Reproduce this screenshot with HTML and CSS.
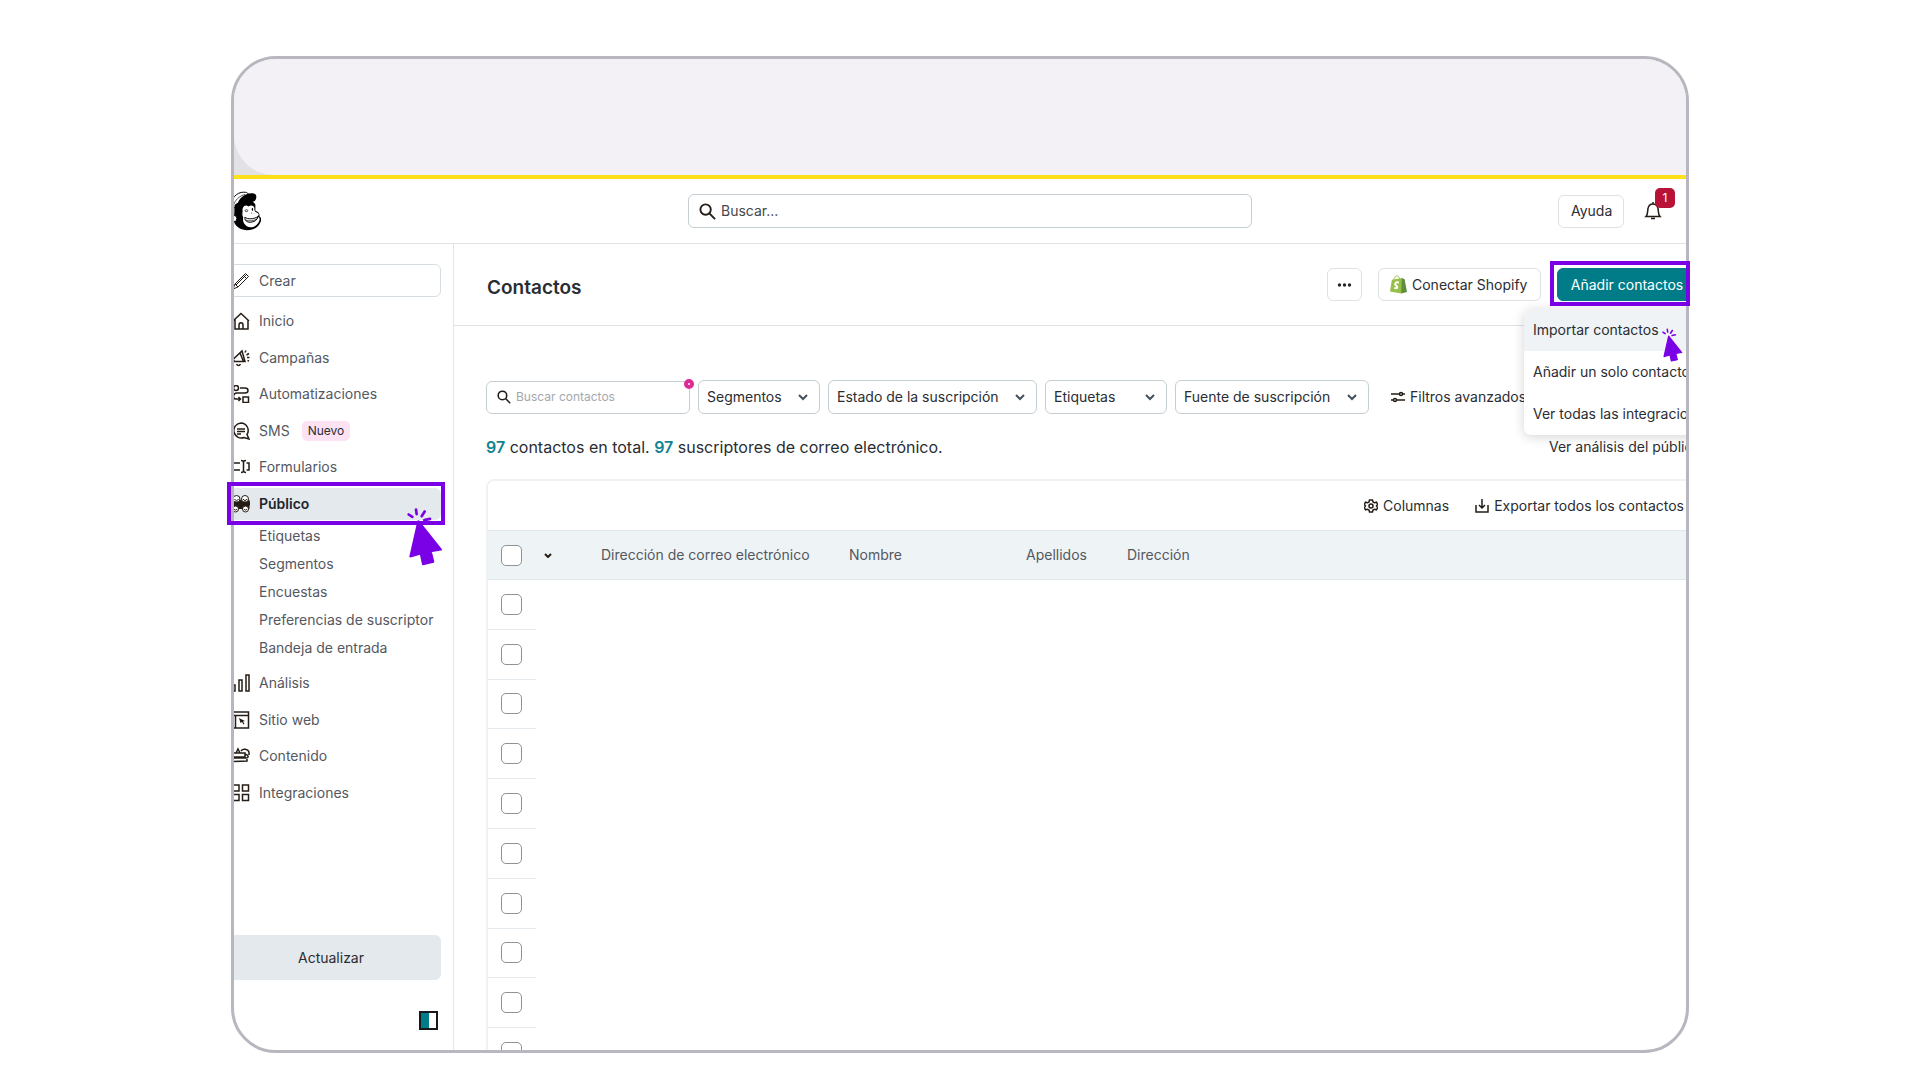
FILE: index.html
```html
<!DOCTYPE html>
<html lang="es">
<head>
  <meta charset="UTF-8">
  <title>Contactos</title>
  <link rel="stylesheet" href="styles.css">
</head>
<body>
  <svg class="defs" aria-hidden="true">
    <symbol id="search" viewBox="0 0 18 18"><circle cx="7" cy="7" r="5.5"/><path d="M11 11l6 6"/></symbol>
    <symbol id="click" viewBox="0 0 108 176">
      <path class="click-arrow" d="M34 42L102 127L71 132L79 164L48 171L41 139L10 148Z"/>
      <path class="click-rays" d="M5 22l11 7M27 7l2 14M53 13l-9 14M69 35l-17 4"/>
    </symbol>
  </svg>

  <div class="stage">
    <div class="frame">
      <div class="browser-bar"><div class="browser-fill"></div></div>

      <div class="app">
        <header class="topbar">
          <svg class="logo" viewBox="0 0 100 120" role="img" aria-label="Mailchimp">
            <path d="M4 50C8 24 26 2 48 3c14 0 18 8 10 14L24 50z" fill="#fff" stroke="#000" stroke-width="3"/>
            <path d="M16 44C22 26 34 14 52 10" fill="none" stroke="#000" stroke-width="2"/>
            <path d="M20 42c10-10 22-14 32-9 12-5 28-2 31 8v18c10 3 14 9 12 17 7 5 7 12 3 19-6 14-20 23-40 23-18 0-34-9-40-26z"/>
            <path d="M28 44C30 22 54 3 78 7c10 2 10 14 3 23-9 6-23 0-31 9z"/>
            <path d="M44 58c-1-12 9-19 18-12 8-6 19-2 18 7 0 8 2 10 10 13 6 4 2 8-2 11 12 3 8 13 3 20-8 12-24 16-34 9-9-6-13-14-11-27-5-8-1-14-2-21z" fill="#fff"/>
            <path d="M51 79c10 7 26 6 40-2-2 11-12 17-24 17-10 0-17-5-16-15z" fill="#fff" stroke="#000" stroke-width="3"/>
            <path d="M53 87c12 5 24 3 34-3M70 66l3 1M77 66l1 1" fill="none" stroke="#000" stroke-width="2"/>
            <ellipse cx="56" cy="59" rx="4" ry="3" fill="none" stroke="#000" stroke-width="2"/>
            <ellipse cx="74" cy="55" rx="2" ry="5"/>
            <circle cx="17" cy="83" r="10" fill="#fff" stroke="#000" stroke-width="3"/>
          </svg>
          <label class="global-search">
            <svg class="line"><use href="#search"/></svg>
            <input type="text" placeholder="Buscar..." aria-label="Buscar">
          </label>
          <div class="top-actions">
            <button class="btn help">Ayuda</button>
            <button class="bell" aria-label="Notificaciones">
              <svg class="line" viewBox="0 0 18 20"><path d="M2 15.500C4 13.500 3.500 10 4 7.500 4.500 4.500 6.500 3 9 3s4.500 1.500 5 4.500c.5 2.500 0 6 2 8zM9 3V1M7 17.500h4"/></svg>
              <span class="badge">1</span>
            </button>
          </div>
        </header>

        <div class="body">
          <aside class="sidebar">
            <button class="create">
              <svg class="line" viewBox="0 0 18 18"><path d="M1 17l2-5L13.500 1.500l3 3L6 15zM11.500 3.500l3 3M4 13L14 3M3 12l3 3"/></svg>
              Crear
            </button>
            <nav class="nav nav-top">
              <a href="#"><svg class="line" viewBox="0 0 18 18"><path d="M1 9l8-7.500 8 7.500M3 7.500V17h13V8M7 17v-4c0-3 4-3 4 0v4"/></svg>Inicio</a>
              <a href="#"><svg class="line" viewBox="0 0 18 18"><path d="M1 10.500L10 2l3 10.500H2.500zM8 4l3.500 8.500M4.500 15c1 2 3 2 4 0M13 3.500l1-2M14.500 6l2.500-1.500M15 8.500h2.500M15.500 11.500l1.500.5"/></svg>Campañas</a>
              <a href="#"><svg class="line" viewBox="0 0 18 18"><circle cx="4" cy="3" r="2.500"/><path d="M8 3h5c4 0 4 5 0 5H5c-4 0-5 6-1 6h4M6.500 12l2 2-2 2M11 12h5.500v5.500H11z"/></svg>Automatizaciones</a>
              <a href="#"><svg class="line" viewBox="0 0 18 18"><path d="M9 1a7.500 7.500 0 1 0 3 14.500l5 1.500-2-4.500A7.500 7.500 0 0 0 9 1zM5 7h8M5 9.500h8M5 12h4"/></svg>SMS <span class="tag">Nuevo</span></a>
              <a href="#"><svg class="line" viewBox="0 0 18 18"><path d="M8 5H0v7h8M9 2.500c2 0 2.500.5 2.500 2v8c0 1.500-.5 2-2.500 2M14 2.500c-2 0-2.500.5-2.500 2v8c0 1.500.5 2 2.500 2M14.500 5H17v7h-2.500"/></svg>Formularios</a>
              <a href="#" class="active"><svg viewBox="0 0 18 18"><path d="M0 5h17.500v9H0z" fill="#241c15"/><g fill="#fff" stroke="#241c15"><circle cx="4.500" cy="4" r="3.500"/><circle cx="13" cy="4" r="3.500"/><circle cx="3.500" cy="14" r="3"/><circle cx="13.500" cy="14" r="3"/></g><path d="M0 6.500h18v4H0z" fill="#241c15"/><path d="M2.500 4c1 2 3 2 4 0M11 4c1 2 3 2 4 0M2 14c1 1.500 2 1.500 3 0M12 14c1 1.500 2 1.500 3 0" fill="none" stroke="#241c15"/></svg>Público</a>
            </nav>
            <nav class="subnav">
              <a href="#">Etiquetas</a>
              <a href="#">Segmentos</a>
              <a href="#">Encuestas</a>
              <a href="#">Preferencias de suscriptor</a>
              <a href="#">Bandeja de entrada</a>
            </nav>
            <nav class="nav nav-bottom">
              <a href="#"><svg class="line" viewBox="0 0 18 18"><path d="M0 11h3v6H0zM7 6h3v11H7zM14 1h3v16h-3z"/></svg>Análisis</a>
              <a href="#"><svg class="line" viewBox="0 0 18 18"><path d="M0 1h16.500v16H0M0 4.500h16.500M3.500 4.500V17"/><path d="M7 7l6 3-2 .5 1.500 2.500-1 .5L10 11l-1.500 1z" fill="#241c15" stroke="none"/></svg>Sitio web</a>
              <a href="#"><svg class="line" viewBox="0 0 18 18"><path d="M0 6h13v4H0zM13 7c4 1 4 4 1 4H1M0 14.500l15-.5v-2M4 6l2-4 2 4M9 4c2-3 7-2 8 1v3"/></svg>Contenido</a>
              <a href="#"><svg class="line" viewBox="0 0 18 18"><path d="M1 1h6v6H1zM10.500 1h6v6h-6zM1 10.500h6v6H1zM10.500 10.500h6v6h-6z"/></svg>Integraciones</a>
            </nav>
            <button class="upgrade">Actualizar</button>
            <button class="collapse" aria-label="Contraer menú"></button>
          </aside>

          <main class="main">
            <div class="page-head">
              <h1>Contactos</h1>
              <button class="btn more" aria-label="Más opciones"><svg viewBox="0 0 14 4"><circle cx="2" cy="2" r="1.700"/><circle cx="7" cy="2" r="1.700"/><circle cx="12" cy="2" r="1.700"/></svg></button>
              <button class="btn shopify">
                <svg viewBox="0 0 18 20">
                  <path d="M2 5l11-2 2 15-3 1.500L0 17.500z" fill="#95bf47"/>
                  <path d="M12.500 3l3 1.500L18 18l-6 1.500z" fill="#5e8e3e"/>
                  <path d="M4 5c.5-3 2.500-4.500 4-4s2 2 2 3" fill="none" stroke="#95bf47"/>
                  <path d="M9.500 8C6 6.500 4.500 9.500 6.500 11s2 4-2 2.500" fill="none" stroke="#fff" stroke-width="2"/>
                </svg>
                Conectar Shopify
              </button>
              <div class="add">
                <button class="btn add-btn">Añadir contactos</button>
                <div class="menu">
                  <a href="#" class="hover">Importar contactos</a>
                  <a href="#">Añadir un solo contacto</a>
                  <a href="#">Ver todas las integraciones</a>
                </div>
              </div>
            </div>

            <div class="content">
              <div class="filters">
                <label class="contact-search">
                  <svg class="line"><use href="#search"/></svg>
                  <input type="text" placeholder="Buscar contactos" aria-label="Buscar contactos">
                  <span class="dot"></span>
                </label>
                <select class="w-short" aria-label="Segmentos"><option>Segmentos</option></select>
                <select class="w-long" aria-label="Estado de la suscripción"><option>Estado de la suscripción</option></select>
                <select class="w-short" aria-label="Etiquetas"><option>Etiquetas</option></select>
                <select class="w-mid" aria-label="Fuente de suscripción"><option>Fuente de suscripción</option></select>
                <button class="plain advanced">
                  <svg class="line" viewBox="0 0 14 14"><path d="M0 4h8M12 4h2M0 10h2M6 10h8"/><circle cx="10" cy="4" r="1.500"/><circle cx="4" cy="10" r="1.500"/></svg>
                  Filtros avanzados
                </button>
              </div>

              <div class="summary">
                <p><b>97</b> contactos en total. <b>97</b> suscriptores de correo electrónico.</p>
                <a href="#">Ver análisis del público</a>
              </div>

              <div class="card">
                <div class="card-tools">
                  <button class="plain">
                    <svg class="line" viewBox="0 0 14 14"><path d="M5.500 1h3l.5 2 1.500.8 2-.6 1.200 2.300L12.500 7l1.200 1.500-1.200 2.300-2-.6L9 11l-.5 2h-3L5 11l-1.500-.8-2 .6L.3 8.500 1.500 7 .3 5.500l1.200-2.300 2 .6L5 3z"/><circle cx="7" cy="7" r="2"/></svg>
                    Columnas
                  </button>
                  <button class="plain">
                    <svg class="line" viewBox="0 0 14 14"><path d="M7 0v9M4 6l3 3 3-3M1 6v7h12V6"/></svg>
                    Exportar todos los contactos
                  </button>
                </div>
                <table>
                  <thead>
                    <tr>
                      <th class="c-check"><input type="checkbox" aria-label="Seleccionar todos"></th>
                      <th class="c-open"><svg class="line" viewBox="0 0 8 5"><path d="M1 1l3 3 3-3"/></svg></th>
                      <th class="c-mail">Dirección de correo electrónico</th>
                      <th class="c-name">Nombre</th>
                      <th class="c-last">Apellidos</th>
                      <th>Dirección</th>
                    </tr>
                  </thead>
                  <tbody>
                    <tr><td><input type="checkbox" aria-label="Contacto 1"></td></tr>
                    <tr><td><input type="checkbox" aria-label="Contacto 2"></td></tr>
                    <tr><td><input type="checkbox" aria-label="Contacto 3"></td></tr>
                    <tr><td><input type="checkbox" aria-label="Contacto 4"></td></tr>
                    <tr><td><input type="checkbox" aria-label="Contacto 5"></td></tr>
                    <tr><td><input type="checkbox" aria-label="Contacto 6"></td></tr>
                    <tr><td><input type="checkbox" aria-label="Contacto 7"></td></tr>
                    <tr><td><input type="checkbox" aria-label="Contacto 8"></td></tr>
                    <tr><td><input type="checkbox" aria-label="Contacto 9"></td></tr>
                    <tr><td><input type="checkbox" aria-label="Contacto 10"></td></tr>
                  </tbody>
                </table>
              </div>
            </div>
          </main>
        </div>
      </div>
    </div>

    <!-- tutorial marks, drawn over the frame edge -->
    <div class="mark mark-nav"></div>
    <div class="mark mark-add"></div>
    <svg class="click click-nav"><use href="#click"/></svg>
    <svg class="click click-add"><use href="#click"/></svg>
  </div>
</body>
</html>
```
FILE: styles.css
```css
* { box-sizing: border-box; }
body { margin: 0; padding: 56px 231px 27px; height: 100vh; background: #fff; color: #2a2d32; font: 14px/20px Inter, "Liberation Sans", sans-serif; }
a { color: inherit; text-decoration: none; }
button, input, select { font: inherit; color: inherit; }
button { cursor: pointer; }
svg { display: block; flex: none; }
.defs { position: absolute; width: 0; height: 0; }
.line { fill: none; stroke: #241c15; stroke-width: 1.5; }

.stage { position: relative; height: 100%; }
.frame { height: 100%; display: flex; flex-direction: column; overflow: hidden; border: 3px solid #b8b6be; border-radius: 45px; }
.browser-bar { flex: none; height: 120px; background: #e2e2e4; border-bottom: 4px solid #ffe01b; }
.browser-fill { height: 100%; background: #f3f1f6; border-bottom-left-radius: 40px; }

/* the app is wider than the frame and gets cropped on both sides */
.app { flex: 1; min-height: 0; display: flex; flex-direction: column; margin: 0 -40px 0 -25px; }
.topbar { flex: none; height: 65px; display: flex; align-items: center; padding: 0 64px 0 19px; border-bottom: 1px solid #dfe4e8; }
.logo { width: 33px; height: 40px; }
.global-search { flex: 0 1 564px; height: 34px; margin-left: 427px; padding: 0 10px; display: flex; align-items: center; gap: 5px; border: 1px solid #c5ced3; border-radius: 6px; }
.global-search svg { width: 17px; height: 17px; stroke-width: 2; }
.global-search input, .contact-search input { flex: 1; min-width: 0; padding: 0; border: 0; outline: 0; background: none; }
.global-search input::placeholder { color: #44474d; opacity: 1; }
.top-actions { margin-left: auto; display: flex; align-items: center; gap: 20px; }
.btn { height: 33px; padding: 0 12px; background: #fff; border: 1px solid #dde2e5; border-radius: 6px; white-space: nowrap; }
.help { width: 66px; }
.bell { position: relative; padding: 0; border: 0; background: none; }
.bell svg { width: 18px; height: 20px; }
.badge { position: absolute; left: 11px; top: -13px; width: 20px; height: 20px; border-radius: 5px; background: #b81237; color: #fff; font-size: 12px; }

.body { flex: 1; min-height: 0; display: flex; }
.sidebar { flex: none; width: 245px; padding: 20px 12px; display: flex; flex-direction: column; border-right: 1px solid #dfe7ea; color: #54585f; }
.create { height: 33px; padding: 0 10px; display: flex; align-items: center; gap: 9px; background: #fff; border: 1px solid #d5dde2; border-radius: 6px; }
.create svg, .nav svg { width: 18px; height: 18px; }
.create svg { stroke-width: 1; }
.nav { display: grid; grid-auto-rows: 1fr; }
.nav-top { height: 219px; margin-top: 6px; }
.nav-bottom { height: 146px; margin-top: 3px; }
.nav a { display: flex; align-items: center; gap: 9px; margin: 2px 0; padding-left: 11px; border-radius: 6px; }
.nav .active { background: #e4e9ed; color: #22252a; font-weight: 600; }
.tag { margin-left: 3px; padding: 0 6px; border-radius: 5px; background: #fde2f3; color: #2a2d32; font-size: 12px; }
.subnav { padding-left: 38px; line-height: 28px; }
.subnav a { display: block; white-space: nowrap; }
.upgrade { height: 45px; margin-top: auto; border: 0; border-radius: 6px; background: #e4e9ed; color: #2a2d32; }
.collapse { width: 19px; height: 19px; margin: 31px 3px 0 auto; padding: 0; border: 2px solid #17191c; background: linear-gradient(90deg, #007c89 50%, #fff 50%); }

.main { flex: 1; min-width: 0; }
.page-head { height: 82px; display: flex; align-items: center; gap: 16px; padding: 0 29px 0 33px; border-bottom: 1px solid #dfe4e8; }
h1 { margin: 6px auto 0 0; font-size: 19px; line-height: 24px; font-weight: 600; }
.more { width: 35px; padding: 0 9px; }
.more svg { width: 15px; height: 4px; fill: #22252a; }
.shopify { width: 163px; padding: 0 11px; display: flex; align-items: center; gap: 5px; }
.shopify svg { width: 17px; height: 19px; }
.add { position: relative; }
.add-btn { width: 140px; border-color: #007c89; background: #007c89; color: #fff; }
.menu { position: absolute; left: -33px; top: 41px; width: 220px; border-radius: 7px; background: #fff; box-shadow: 0 2px 12px #0000002b; z-index: 1; }
.menu a { display: block; padding: 11px 9px; white-space: nowrap; }
.menu .hover { background: #eff3f6; border-radius: 7px 7px 0 0; }

.content { padding: 54px 0 0 32px; }
.filters { display: flex; align-items: center; gap: 8px; }
.filters select { height: 34px; padding: 0 8px; appearance: none; border: 1px solid #c5ced3; border-radius: 6px; background: #fff url("data:image/svg+xml,%3Csvg xmlns='http://www.w3.org/2000/svg' width='10' height='7'%3E%3Cpath d='M1 1l4 4 4-4' fill='none' stroke='%2344505c' stroke-width='2'/%3E%3C/svg%3E") no-repeat right 11px center; }
.w-short { width: 122px; }
.w-mid { width: 194px; }
.w-long { width: 209px; }
.contact-search { position: relative; width: 204px; height: 33px; padding: 0 10px; display: flex; align-items: center; gap: 5px; border: 1px solid #c5ced3; border-radius: 6px; font-size: 12px; }
.contact-search svg { width: 14px; height: 14px; stroke-width: 2; }
.contact-search input::placeholder { color: #a3a8ae; opacity: 1; }
.dot { position: absolute; right: -5px; top: -3px; width: 10px; height: 10px; border: 4px solid #dd2a94; border-radius: 5px; background: #fff; }
.plain { display: flex; align-items: center; gap: 5px; padding: 0; border: 0; background: none; white-space: nowrap; }
.plain svg { width: 14px; height: 14px; }
.advanced { margin-left: 14px; }

.summary { display: flex; align-items: center; height: 65px; }
.summary p { flex: none; width: 1063px; margin: 0; font-size: 16px; }
.summary a { white-space: nowrap; }
.summary b { color: #128391; font-weight: 600; }

.card { border: 2px solid #eff2f4; border-radius: 8px 0 0 0; }
.card-tools { height: 49px; display: flex; align-items: center; justify-content: flex-end; gap: 26px; padding-right: 40px; }
table { width: 100%; height: 548px; border-collapse: collapse; table-layout: fixed; }
tr { height: 49px; }
th { padding: 0; background: #eef3f6; border: solid #dfe7ec; border-width: 1px 0; color: #54585f; font-weight: 400; text-align: left; }
td { padding: 0 13px; border-bottom: 1px solid #e4eaee; }
.c-check { width: 48px; padding-left: 13px; }
.c-open { width: 65px; padding-left: 8px; }
.c-open svg { width: 8px; height: 5px; stroke-width: 2; }
.c-mail { width: 248px; }
.c-name { width: 177px; }
.c-last { width: 101px; }
table input { display: block; width: 21px; height: 21px; margin: 0; appearance: none; background: #fff; border: 1px solid #8b9298; border-radius: 5px; }

.mark { position: absolute; z-index: 2; border: 4px solid #7a00e6; pointer-events: none; }
.mark-nav { left: -4px; top: 426px; width: 218px; height: 43px; }
.mark-add { right: -1px; top: 205px; width: 140px; height: 45px; }
.click { position: absolute; z-index: 2; pointer-events: none; }
.click-arrow { fill: #7a00e6; stroke: #7a00e6; stroke-width: 6; stroke-linejoin: round; }
.click-rays { fill: none; stroke: #7a00e6; stroke-width: 8; stroke-linecap: round; }
.click-nav { left: 176px; top: 451px; width: 36px; height: 59px; }
.click-add { right: 6px; top: 272px; width: 21px; height: 34px; }
```
